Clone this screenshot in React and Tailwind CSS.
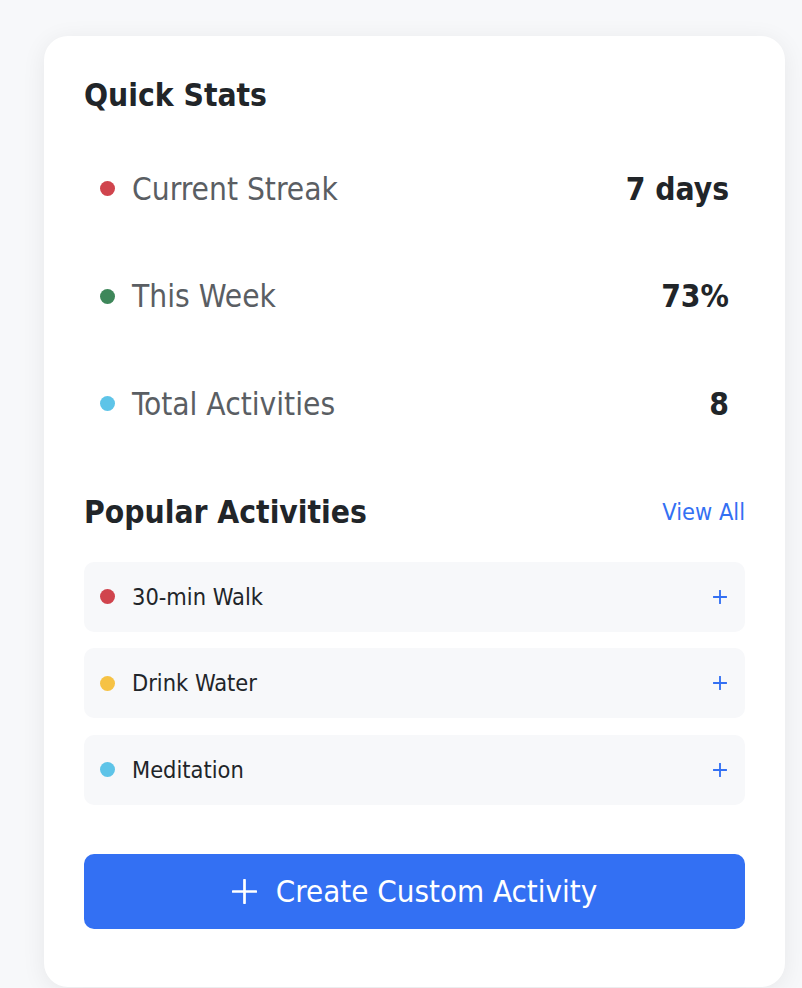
import React from 'react';

const stats = [
  { label: 'Current Streak', value: '7 days', dot: 'bg-[#d0444d]' },
  { label: 'This Week', value: '73%', dot: 'bg-[#3e875a]' },
  { label: 'Total Activities', value: '8', dot: 'bg-[#5ec4e8]' },
];

const popular = [
  { name: '30-min Walk', dot: 'bg-[#d0444d]' },
  { name: 'Drink Water', dot: 'bg-[#f6c244]' },
  { name: 'Meditation', dot: 'bg-[#5ec4e8]' },
];

function PlusIcon({ size, stroke, className }) {
  return (
    <svg width={size} height={size} viewBox="0 0 24 24" className={className} fill="none">
      <path d="M12 1v22M1 12h22" stroke="currentColor" strokeWidth={stroke} strokeLinecap="round" />
    </svg>
  );
}

export default function App() {
  return (
    <div
      className="min-h-[988px] bg-[#f7f8fa] pt-[36px] pl-[44px]"
      style={{ fontFamily: '"DejaVu Sans Condensed", "DejaVu Sans", sans-serif' }}
    >
      <div className="w-[741px] rounded-3xl bg-white px-10 pt-10 pb-[58px] shadow-[0_4px_24px_rgba(0,0,0,0.07)]">
        <h3 className="text-[31.5px] leading-[38px] font-bold text-[#212529]">Quick Stats</h3>

        <div className="mt-[21px]">
          {stats.map((s) => (
            <div key={s.label} className="flex h-[107.5px] items-center justify-between px-4">
              <div className="flex items-center">
                <span className={`h-[15px] w-[15px] rounded-full ${s.dot}`}></span>
                <span className="ml-[17px] text-[31.4px] leading-[36px] text-[#5a5e63]">{s.label}</span>
              </div>
              <span className="text-[31.5px] leading-[36px] font-bold text-[#212529]">{s.value}</span>
            </div>
          ))}
        </div>

        <div className="mt-[37px] flex items-center justify-between">
          <h3 className="text-[31.5px] leading-[35px] font-bold text-[#212529]">Popular Activities</h3>
          <a className="text-[23.4px] leading-[28px] text-[#3370f3]">View All</a>
        </div>

        <div className="mt-[32px] flex flex-col gap-[16.5px]">
          {popular.map((p) => (
            <div
              key={p.name}
              className="flex h-[70px] items-center justify-between rounded-[10px] bg-[#f7f8fa] pl-4 pr-[18px]"
            >
              <div className="flex items-center">
                <span className={`h-[15px] w-[15px] rounded-full ${p.dot}`}></span>
                <span className="ml-[17px] text-[23.4px] leading-[28px] text-[#212529]">{p.name}</span>
              </div>
              <PlusIcon size={14} stroke={3.2} className="text-[#3370f3]" />
            </div>
          ))}
        </div>

        <button className="mt-[49px] flex h-[75px] w-full items-center justify-center rounded-[10px] bg-[#3370f3] text-white">
          <PlusIcon size={25} stroke={2.6} className="mr-[19px]" />
          <span className="text-[31px] leading-[36px]">Create Custom Activity</span>
        </button>
      </div>
    </div>
  );
}
